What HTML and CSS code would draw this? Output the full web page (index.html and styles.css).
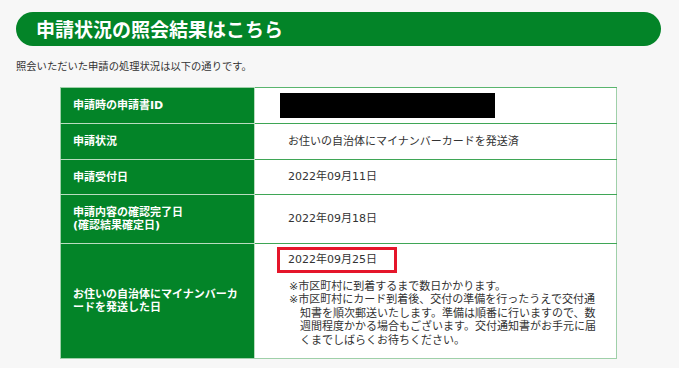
FILE: index.html
```html
<!DOCTYPE html>
<html lang="ja">
<head>
    <meta charset="UTF-8">
    <meta name="viewport" content="width=device-width, initial-scale=1.0">
    <title>申請状況の照会結果</title>
    <link rel="stylesheet" href="styles.css">
</head>
<body>
    <div class="page">
        <h1 class="title-bar">申請状況の照会結果はこちら</h1>
        <p class="lead">照会いただいた申請の処理状況は以下の通りです。</p>

        <table class="status-table">
            <colgroup>
                <col class="col-label">
                <col>
            </colgroup>
            <tr class="row-id">
                <th>申請時の申請書ID</th>
                <td><span class="masked"></span></td>
            </tr>
            <tr class="row-short">
                <th>申請状況</th>
                <td>お住いの自治体にマイナンバーカードを発送済</td>
            </tr>
            <tr class="row-short">
                <th>申請受付日</th>
                <td>2022年09月11日</td>
            </tr>
            <tr class="row-mid">
                <th>申請内容の確認完了日<br>(確認結果確定日)</th>
                <td>2022年09月18日</td>
            </tr>
            <tr class="row-sent">
                <th>お住いの自治体にマイナンバーカードを発送した日</th>
                <td>
                    <div class="date-mark">2022年09月25日</div>
                    <ul class="notes">
                        <li>※市区町村に到着するまで数日かかります。</li>
                        <li>※市区町村にカード到着後、交付の準備を行ったうえで交付通知書を順次郵送いたします。準備は順番に行いますので、数週間程度かかる場合もございます。交付通知書がお手元に届くまでしばらくお待ちください。</li>
                    </ul>
                </td>
            </tr>
        </table>
    </div>
</body>
</html>
```

FILE: styles.css
```css
body {
    margin: 0;
    background: #f7f7f7;
    font-family: "DejaVu Sans", "Noto Sans CJK JP", sans-serif;
    color: #333;
}
.page {
    width: 645px;
    padding: 12px 0 0 16px;
}
.title-bar {
    margin: 0;
    height: 34px;
    line-height: 34px;
    padding: 0 20px;
    background: #038428;
    color: #fff;
    font-family: "Noto Sans CJK JP", sans-serif;
    font-size: 19px;
    font-weight: bold;
    border-radius: 17px;
}
.lead {
    margin: 13px 0 14px;
    font-size: 10.3px;
    line-height: 14px;
}
.status-table {
    width: 557px;
    margin: 0 auto;
    table-layout: fixed;
    border-collapse: collapse;
    border: 1px solid #9fd0a9;
    background: #fff;
    font-size: 11px;
}
.col-label {
    width: 194px;
}
.status-table th {
    padding: 0 12px;
    background: #038428;
    color: #fff;
    font-weight: bold;
    text-align: left;
    line-height: 13px;
    border-bottom: 1px solid #b9dcbf;
    border-right: 1px solid #b9dcbf;
}
.status-table td {
    padding: 0 16px 0 33px;
    border-bottom: 1px solid #3fa656;
    line-height: 14px;
}
.status-table tr:first-child td {
    border-top: 1px solid #5ab56e;
}
.status-table tr:last-child th,
.status-table tr:last-child td {
    border-bottom-color: #9fd0a9;
}
.row-id { height: 36px; }
.row-short { height: 36px; }
.row-short + .row-short { height: 35px; }
.row-mid { height: 49px; }
.row-sent { height: 115px; }

.masked {
    display: block;
    width: 215px;
    height: 25px;
    margin-left: -8px;
    background: #000;
}
.row-sent td {
    padding-left: 22px;
    padding-top: 2px;
    padding-bottom: 10px;
}
.date-mark {
    display: inline-block;
    padding: 0 8px;
    height: 20px;
    line-height: 20px;
    width: 98px;
    border: 3px solid #e5162a;
}
.notes {
    list-style: none;
    margin: 7px 0 0;
    padding: 0 0 0 12px;
    width: 312px;
    line-height: 13.5px;
}
.notes li {
    padding-left: 11px;
    text-indent: -11px;
}
```
